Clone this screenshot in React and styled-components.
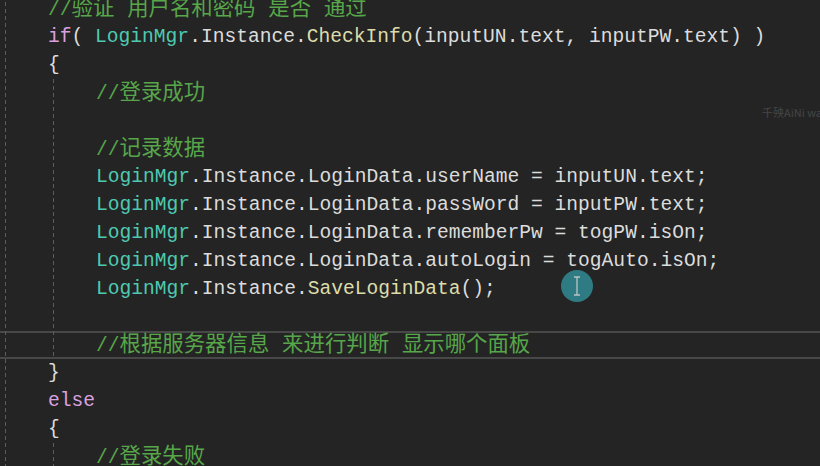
import styled, { createGlobalStyle } from "styled-components";

const Global = createGlobalStyle`
  html, body {
    margin: 0;
    padding: 0;
    background: #242424;
    overflow: hidden;
  }
`;

const Editor = styled.div`
  position: relative;
  width: 820px;
  height: 466px;
  overflow: hidden;
  background: #242424;
  font-family: "Liberation Mono", "Noto Sans CJK SC", monospace;
  font-size: 19.6px;
  color: #dcdcdc;
`;

const Code = styled.div`
  display: flex;
  flex-direction: column;
  margin-top: -5px;
`;

const guideOuter = "linear-gradient(#5c5c5c, #5c5c5c) 5px 0 / 1px 100% no-repeat";
const guideInner = "linear-gradient(#5c5c5c, #5c5c5c) 53px 0 / 1px 100% no-repeat";

const Line = styled.div`
  position: relative;
  height: 28px;
  line-height: 28px;
  box-sizing: border-box;
  display: flex;
  align-items: center;
  white-space: pre;
  padding-left: ${(p) => p.$indent * 48}px;
  border-top: 2px solid ${(p) => (p.$current ? "#484848" : "transparent")};
  border-bottom: 2px solid ${(p) => (p.$current ? "#484848" : "transparent")};

  &::before {
    content: "";
    position: absolute;
    inset: -2px 0;
    pointer-events: none;
    background: ${(p) => (p.$inner ? guideInner + ", " : "")}${guideOuter};
    -webkit-mask: repeating-linear-gradient(#000 0 4px, transparent 4px 7px);
    mask: repeating-linear-gradient(#000 0 4px, transparent 4px 7px);
  }
`;

const Tok = styled.span`
  color: ${(p) =>
    ({
      kw: "#d8a0df",
      cls: "#4ec9b0",
      fn: "#dcdcaa",
      tx: "#dcdcdc",
    })[p.$kind]};
`;

const Comment = styled.span`
  color: #57a64a;
`;

const Han = styled.span`
  font-family: "Liberation Mono", "Noto Sans CJK SC", monospace;
  font-size: 21.4px;
`;

const Cursor = styled.div`
  position: absolute;
  left: 561px;
  top: 270px;
  width: 32px;
  height: 32px;
  border-radius: 50%;
  background: #2f7b84;
  display: flex;
  align-items: center;
  justify-content: center;
`;

const Watermark = styled.div`
  position: absolute;
  left: 762px;
  top: 104px;
  font-family: "Noto Sans CJK SC", sans-serif;
  font-size: 11px;
  color: #464646;
  white-space: nowrap;
`;

const Cm = ({ text }) => (
  <Comment>
    //<Han>{text}</Han>
  </Comment>
);

const lines = [
  { indent: 1, parts: [["cm", "验证 用户名和密码 是否 通过"]] },
  {
    indent: 1,
    parts: [
      ["kw", "if"],
      ["tx", "( "],
      ["cls", "LoginMgr"],
      ["tx", ".Instance."],
      ["fn", "CheckInfo"],
      ["tx", "(inputUN.text, inputPW.text) )"],
    ],
  },
  { indent: 1, parts: [["tx", "{"]] },
  { indent: 2, inner: true, parts: [["cm", "登录成功"]] },
  { indent: 2, inner: true, parts: [] },
  { indent: 2, inner: true, parts: [["cm", "记录数据"]] },
  {
    indent: 2,
    inner: true,
    parts: [
      ["cls", "LoginMgr"],
      ["tx", ".Instance.LoginData.userName = inputUN.text;"],
    ],
  },
  {
    indent: 2,
    inner: true,
    parts: [
      ["cls", "LoginMgr"],
      ["tx", ".Instance.LoginData.passWord = inputPW.text;"],
    ],
  },
  {
    indent: 2,
    inner: true,
    parts: [
      ["cls", "LoginMgr"],
      ["tx", ".Instance.LoginData.rememberPw = togPW.isOn;"],
    ],
  },
  {
    indent: 2,
    inner: true,
    parts: [
      ["cls", "LoginMgr"],
      ["tx", ".Instance.LoginData.autoLogin = togAuto.isOn;"],
    ],
  },
  {
    indent: 2,
    inner: true,
    parts: [
      ["cls", "LoginMgr"],
      ["tx", ".Instance."],
      ["fn", "SaveLoginData"],
      ["tx", "();"],
    ],
  },
  { indent: 2, inner: true, parts: [] },
  {
    indent: 2,
    inner: true,
    current: true,
    parts: [["cm", "根据服务器信息 来进行判断 显示哪个面板"]],
  },
  { indent: 1, parts: [["tx", "}"]] },
  { indent: 1, parts: [["kw", "else"]] },
  { indent: 1, parts: [["tx", "{"]] },
  { indent: 2, inner: true, parts: [["cm", "登录失败"]] },
];

export default function App() {
  return (
    <>
      <Global />
      <Editor>
        <Code>
          {lines.map((l, i) => (
            <Line key={i} $indent={l.indent} $inner={l.inner} $current={l.current}>
              {l.parts.map(([kind, v], j) =>
                kind === "cm" ? (
                  <Cm key={j} text={v} />
                ) : (
                  <Tok key={j} $kind={kind}>
                    {v}
                  </Tok>
                )
              )}
            </Line>
          ))}
        </Code>
        <Watermark>千殃AiNi wang</Watermark>
        <Cursor>
          <svg width="10" height="20" viewBox="0 0 10 20" fill="none" stroke="#b9c4c6" strokeWidth="1.3">
            <path d="M2 1h6M2 19h6M5 1v18" />
          </svg>
        </Cursor>
      </Editor>
    </>
  );
}
